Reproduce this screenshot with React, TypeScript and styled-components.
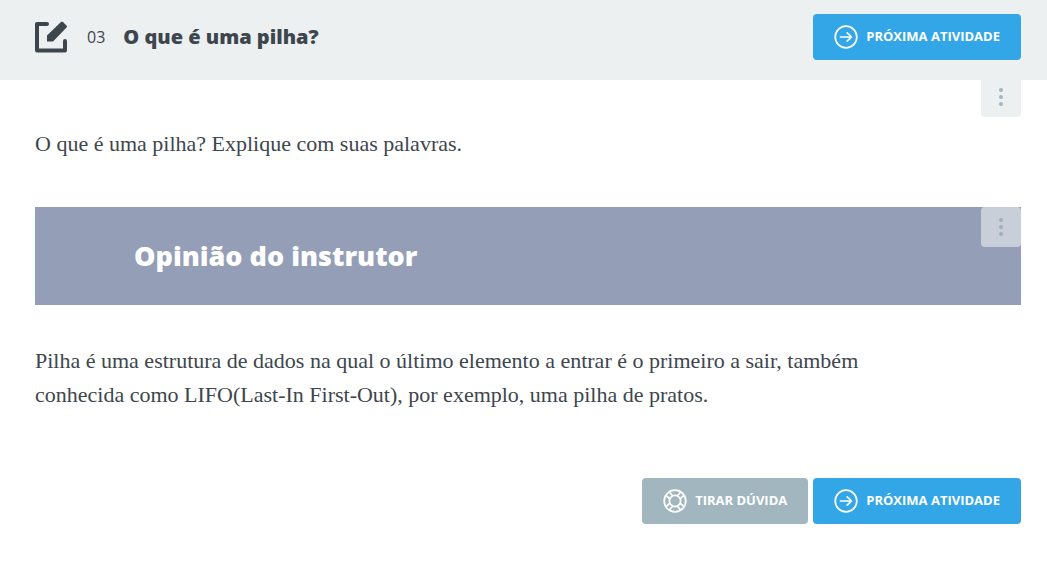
import React from 'react';
import styled, { createGlobalStyle } from 'styled-components';

const GlobalStyle = createGlobalStyle`
  *, *::before, *::after { box-sizing: border-box; }
  body {
    margin: 0;
    background: #fff;
    color: #3d464d;
    font-family: 'Open Sans', sans-serif;
  }
  h1, h2, p { margin: 0; }
`;

const Header = styled.header`
  display: flex;
  align-items: center;
  padding: 14px 26px 20px 35px;
  background: #ecf0f1;
`;

const TaskNumber = styled.span`
  margin-left: 20px;
  font-size: 16px;
  line-height: 24px;
`;

const TaskTitle = styled.h1`
  flex: 1;
  margin-left: 18px;
  font-size: 20px;
  font-weight: 800;
  line-height: 28px;
`;

const ActionButton = styled.button<{ $tone: 'primary' | 'muted' }>`
  display: inline-flex;
  align-items: center;
  gap: 8px;
  height: 46px;
  padding: 0 21px;
  border: 0;
  border-radius: 4px;
  background: ${({ $tone }) => ($tone === 'primary' ? '#32a6e6' : '#a2b6bf')};
  color: #fff;
  font: 700 13px/18px 'Open Sans', sans-serif;
  text-transform: uppercase;
  white-space: nowrap;
  cursor: pointer;
`;

const ButtonLabel = styled.span`
  padding-bottom: 2px;
`;

const Main = styled.main`
  padding: 0 26px 38px 35px;
`;

const Section = styled.section`
  position: relative;
`;

const MenuButton = styled.button<{ $overlay?: boolean }>`
  position: absolute;
  top: 0;
  right: 0;
  display: flex;
  align-items: center;
  justify-content: center;
  width: 40px;
  height: ${({ $overlay }) => ($overlay ? '40px' : '37px')};
  padding: ${({ $overlay }) => ($overlay ? '0' : '0 0 3px')};
  border: 0;
  border-radius: ${({ $overlay }) => ($overlay ? '4px' : '0 0 4px 4px')};
  background: ${({ $overlay }) => ($overlay ? '#c8cfd9' : '#ecf0f1')};
  color: ${({ $overlay }) => ($overlay ? '#9eafbd' : '#a2b6bf')};
  cursor: pointer;
`;

const Prose = styled.p<{ $spaceTop: number }>`
  max-width: 860px;
  padding-top: ${({ $spaceTop }) => $spaceTop}px;
  font-family: 'Source Serif Pro', 'Liberation Serif', serif;
  font-size: 22px;
  line-height: 34px;
`;

const Banner = styled.div`
  position: relative;
  margin-top: 46px;
  padding: 31px 100px 31px 99px;
  background: #949eb6;
`;

const BannerTitle = styled.h2`
  color: #fff;
  font-size: 27px;
  font-weight: 800;
  line-height: 36px;
`;

const Actions = styled.div`
  display: flex;
  justify-content: flex-end;
  gap: 5px;
  margin-top: 66px;
`;

const EditIcon = () => (
  <svg width="32" height="32" viewBox="0 0 32 32" aria-hidden="true">
    <path
      d="M12 3H2v26.500h28V20"
      fill="none"
      stroke="#3d464d"
      strokeWidth="4"
      strokeLinecap="round"
      strokeLinejoin="round"
    />
    <path d="M12 14.500 26 1.100q1-1 2 0l3.500 3.500q1 1 0 2L18 20.500h-6z" fill="#3d464d" />
  </svg>
);

const ArrowIcon = () => (
  <svg width="24" height="24" viewBox="0 0 24 24" fill="none" stroke="#fff" aria-hidden="true">
    <circle cx="12" cy="12" r="10.800" strokeWidth="1.700" />
    <path
      d="M6.500 12h11M13.200 7.800l4.300 4.200-4.300 4.200"
      strokeWidth="1.700"
      strokeLinecap="round"
      strokeLinejoin="round"
    />
  </svg>
);

const LifebuoyIcon = () => (
  <svg width="24" height="24" viewBox="0 0 24 24" fill="none" stroke="#fff" strokeWidth="1.700" aria-hidden="true">
    <circle cx="12" cy="12" r="10.800" />
    <circle cx="12" cy="12" r="5.600" />
    {[0, 90, 180, 270].map((angle) => (
      <path key={angle} d="M14 7.200l3.700-4.200M16.800 10l4.200-3.700" transform={`rotate(${angle} 12 12)`} />
    ))}
  </svg>
);

const DotsIcon = () => (
  <svg width="4" height="18" viewBox="0 0 4 18" fill="currentColor" aria-hidden="true">
    <circle cx="2" cy="2" r="2" />
    <circle cx="2" cy="9" r="2" />
    <circle cx="2" cy="16" r="2" />
  </svg>
);

const NextButton = () => (
  <ActionButton type="button" $tone="primary">
    <ArrowIcon />
    <ButtonLabel>Próxima Atividade</ButtonLabel>
  </ActionButton>
);

export default function App() {
  return (
    <>
      <GlobalStyle />
      <Header>
        <EditIcon />
        <TaskNumber>03</TaskNumber>
        <TaskTitle>O que é uma pilha?</TaskTitle>
        <NextButton />
      </Header>
      <Main>
        <Section>
          <MenuButton type="button" aria-label="Opções da atividade">
            <DotsIcon />
          </MenuButton>
          <Prose $spaceTop={47}>O que é uma pilha? Explique com suas palavras.</Prose>
        </Section>
        <Section>
          <Banner>
            <BannerTitle>Opinião do instrutor</BannerTitle>
            <MenuButton type="button" $overlay aria-label="Opções da opinião">
              <DotsIcon />
            </MenuButton>
          </Banner>
          <Prose $spaceTop={39}>
            Pilha é uma estrutura de dados na qual o último elemento a entrar é o primeiro a sair, também
            conhecida como LIFO(Last-In First-Out), por exemplo, uma pilha de pratos.
          </Prose>
        </Section>
        <Actions>
          <ActionButton type="button" $tone="muted">
            <LifebuoyIcon />
            <ButtonLabel>Tirar dúvida</ButtonLabel>
          </ActionButton>
          <NextButton />
        </Actions>
      </Main>
    </>
  );
}
